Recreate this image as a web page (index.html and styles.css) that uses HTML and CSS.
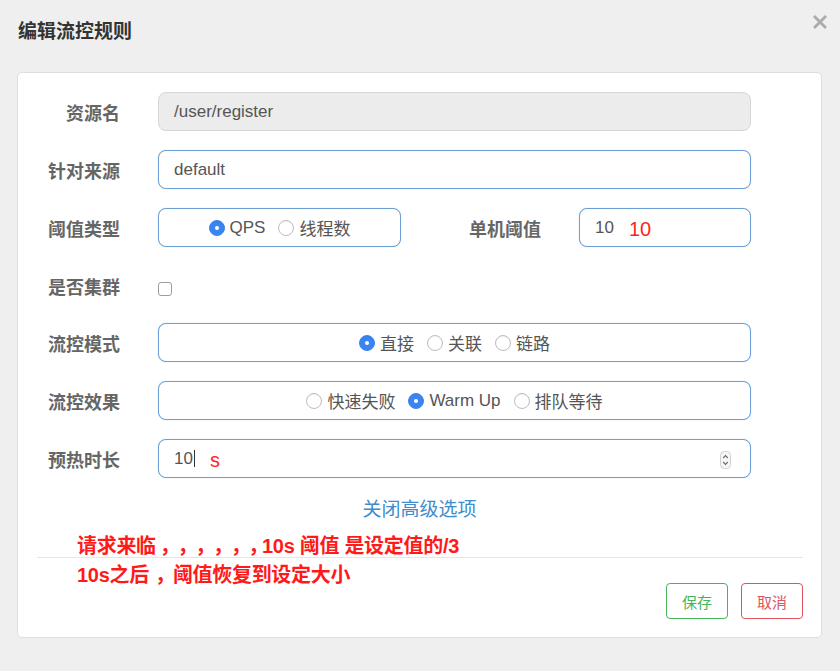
FILE: index.html
```html
<!DOCTYPE html>
<html lang="zh-CN">
<head>
<meta charset="utf-8">
<title>编辑流控规则</title>
<link rel="stylesheet" href="styles.css">
</head>
<body>
<div class="modal">
  <div class="modal-header">
    <h3 class="modal-title">编辑流控规则</h3>
    <button class="close" type="button" aria-label="关闭">
      <svg width="14" height="14" viewBox="0 0 14 14"><path d="M2 2 L12 12 M12 2 L2 12" stroke="#ababab" stroke-width="2.8" stroke-linecap="square" fill="none"/></svg>
    </button>
  </div>
  <div class="card">
    <div class="card-body">
      <div class="row">
        <label class="label">资源名</label>
        <div class="field wide disabled">/user/register</div>
      </div>
      <div class="row">
        <label class="label">针对来源</label>
        <div class="field wide">default</div>
      </div>
      <div class="row">
        <label class="label">阈值类型</label>
        <div class="field short center">
          <span class="opt"><span class="radio on"></span>QPS</span>
          <span class="opt"><span class="radio"></span>线程数</span>
        </div>
        <label class="label label-mid">单机阈值</label>
        <div class="field small">10<span class="note note-num">10</span></div>
      </div>
      <div class="row row-check">
        <label class="label">是否集群</label>
        <span class="checkbox"></span>
      </div>
      <div class="row">
        <label class="label">流控模式</label>
        <div class="field wide center">
          <span class="opt"><span class="radio on"></span>直接</span>
          <span class="opt"><span class="radio"></span>关联</span>
          <span class="opt"><span class="radio"></span>链路</span>
        </div>
      </div>
      <div class="row">
        <label class="label">流控效果</label>
        <div class="field wide center">
          <span class="opt"><span class="radio"></span>快速失败</span>
          <span class="opt"><span class="radio on"></span>Warm Up</span>
          <span class="opt"><span class="radio"></span>排队等待</span>
        </div>
      </div>
      <div class="row">
        <label class="label">预热时长</label>
        <div class="field wide spin">
          <span class="val">10<span class="caret"></span><span class="note note-s">s</span></span>
          <svg class="spinner" width="11" height="18" viewBox="0 0 11 18"><rect x="0.5" y="0.5" width="10" height="17" rx="4" fill="#f7f7f7" stroke="#cfcfcf"/><path d="M3.2 7 L5.5 4.6 L7.8 7 M3.2 11 L5.5 13.4 L7.8 11" stroke="#6a6a6a" stroke-width="1.1" fill="none"/></svg>
        </div>
      </div>
      <div class="toggle"><a class="link">关闭高级选项</a></div>
    </div>
    <div class="footer">
      <button class="btn btn-save" type="button">保存</button>
      <button class="btn btn-cancel" type="button">取消</button>
    </div>
    <div class="annotation">请求来临<span class="c">，</span><span class="c">，</span><span class="c">，</span><span class="c">，</span><span class="c">，</span><span class="c">，</span>10s 阈值 是设定值的/3<br>10s之后<span class="c c-wide">，</span>阈值恢复到设定大小</div>
  </div>
</div>
</body>
</html>
```
FILE: styles.css
```css
* { box-sizing: border-box; }
html, body { margin: 0; padding: 0; }
body {
  background: #efefef;
  font-family: "Liberation Sans", "Noto Sans CJK SC", sans-serif;
  color: #555;
}
.modal {
  width: 840px;
  height: 671px;
  overflow: hidden;
}
.modal-header {
  height: 72px;
  display: flex;
  justify-content: space-between;
  align-items: flex-start;
  padding: 0 13px 0 18px;
}
.modal-title {
  margin: 20px 0 0;
  font-size: 19px;
  line-height: 24px;
  font-weight: bold;
  color: #333;
}
.close {
  margin-top: 15px;
  padding: 0;
  border: 0;
  background: none;
  width: 14px;
  height: 14px;
  display: block;
}
.close svg { display: block; }
.card {
  position: relative;
  margin: 0 18px 0 17px;
  height: 566px;
  background: #fff;
  border: 1px solid #dedede;
  border-radius: 5px;
}
.card-body {
  padding-top: 19px;
}
.row {
  display: flex;
  align-items: center;
  height: 39px;
  margin-bottom: 19px;
}
.row-check { height: 38px; }
.label {
  width: 102px;
  margin-right: 38px;
  text-align: right;
  font-size: 18px;
  font-weight: bold;
  color: #666;
  padding-top: 1px;
}
.label-mid { width: 140px; }
.field {
  height: 39px;
  border: 1px solid #6b9fd5;
  border-radius: 8px;
  box-shadow: 0 0 1px rgba(102, 160, 216, 0.6);
  display: flex;
  align-items: center;
  padding: 0 15px;
  font-size: 17px;
  color: #555;
  background: #fff;
}
.wide { width: 593px; }
.short { width: 243px; }
.small { width: 172px; }
.disabled {
  background: #ececec;
  border-color: #d6d6d6;
  box-shadow: none;
}
.center { justify-content: center; gap: 13px; }
.opt {
  display: inline-flex;
  align-items: center;
  gap: 5px;
  font-size: 17px;
  color: #555;
}
.radio {
  width: 16px;
  height: 16px;
  border-radius: 50%;
  border: 1px solid #bdbdbd;
  background: #fff;
  box-shadow: inset 0 1px 1px rgba(0,0,0,0.06);
  display: inline-block;
  position: relative;
}
.radio.on {
  background: #3a85f2;
  border-color: #3a85f2;
}
.radio.on::after {
  content: "";
  position: absolute;
  left: 5px;
  top: 5px;
  width: 4px;
  height: 4px;
  border-radius: 50%;
  background: #fff;
}
.checkbox {
  width: 14px;
  height: 14px;
  border: 1px solid #9c9c9c;
  border-radius: 3px;
  background: #fff;
  margin-top: 7px;
}
.note {
  color: #ff1f1f;
  font-size: 20px;
}
.note-num { margin-left: 15px; padding-top: 3px; }
.spin { justify-content: space-between; padding-right: 19px; }
.val { display: inline-flex; align-items: center; }
.caret {
  display: inline-block;
  width: 1px;
  height: 17px;
  background: #333;
  margin-left: 1px;
}
.note-s { margin-left: 15px; padding-top: 3px; }
.spinner { display: block; margin-top: 2px; }
.toggle {
  text-align: center;
  line-height: 26px;
  height: 26px;
  margin-bottom: 34px;
}
.link {
  font-size: 19px;
  color: #3f8ccc;
  text-decoration: none;
}
.footer {
  margin: 0 18px 0 19px;
  border-top: 1px solid #e5e5e5;
  padding: 25px 0 18px;
  display: flex;
  justify-content: flex-end;
  gap: 13px;
}
.btn {
  width: 62px;
  height: 36px;
  background: #fff;
  border-radius: 4px;
  font-family: "Liberation Sans", "Noto Sans CJK SC", sans-serif;
  font-size: 15px;
  padding: 0;
}
.btn-save { border: 1px solid #45b55a; color: #45b55a; }
.btn-cancel { border: 1px solid #e0525d; color: #e0525d; }
.annotation {
  position: absolute;
  left: 59px;
  top: 459px;
  font-size: 20px;
  line-height: 29px;
  color: #ff1a1a;
  font-weight: bold;
  letter-spacing: -0.3px;
  white-space: nowrap;
  text-spacing-trim: space-all;
}
.c {
  padding-left: 4px;
  letter-spacing: -6.3px;
}
.c-wide { padding-left: 6px; letter-spacing: -2px; }
```
